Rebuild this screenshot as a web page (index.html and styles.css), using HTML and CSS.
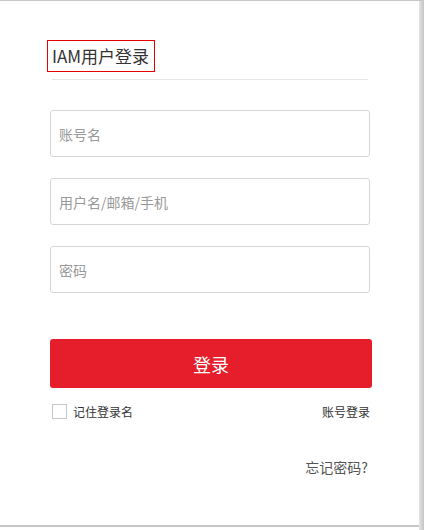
FILE: index.html
```html
<!DOCTYPE html>
<html lang="zh">
<head>
<meta charset="utf-8">
<link rel="stylesheet" href="styles.css">
</head>
<body>
<div class="card">
  <div class="title-row"><span class="title">IAM用户登录</span></div>
  <div class="divider"></div>
  <div class="field first"><span class="ph">账号名</span></div>
  <div class="field"><span class="ph">用户名/邮箱/手机</span></div>
  <div class="field"><span class="ph">密码</span></div>
  <button class="btn">登录</button>
  <div class="opts">
    <label class="remember"><span class="box"></span>记住登录名</label>
    <span class="link">账号登录</span>
  </div>
  <div class="forgot">忘记密码?</div>
</div>
</body>
</html>
```
FILE: styles.css
```css
html, body { margin: 0; padding: 0; }
body {
  width: 424px; height: 530px;
  background: linear-gradient(to right, #fff 0, #fff 419px, #e4e4e4 419px, #c4c4c4 424px);
  border-top: 1px solid #c8c8c8;
  box-sizing: border-box;
  font-family: "Noto Sans CJK SC", "Noto Sans", sans-serif;
  overflow: hidden;
}
.card {
  width: 419px; height: 526px;
  background: #fff;
  box-sizing: border-box;
  padding: 39px 0 0 50px;
  border-bottom: 2px solid #c8c8c8;
}
.title-row { display: flex; }
.title {
  margin-left: -3px;
  width: 108px; height: 32px;
  box-sizing: border-box;
  border: 1px solid #e60000;
  font-size: 17px; color: #333;
  padding-left: 4px;
  line-height: 30px;
  white-space: nowrap;
}
.divider {
  margin: 7px 0 0 2px;
  width: 316px; height: 1px; background: #e4e4e4;
}
.field {
  width: 320px; height: 47px;
  box-sizing: border-box;
  border: 1px solid #d6d6d6; border-radius: 3px;
  margin-top: 21px;
  display: flex; align-items: center;
  padding-left: 8px;
}
.field.first { margin-top: 30px; }
.ph { font-size: 14px; color: #999; }
.btn {
  display: block;
  width: 322px; height: 49px;
  margin-top: 46px;
  border: 0; border-radius: 3px;
  background: #e61e2c; color: #fff;
  font-family: inherit; font-size: 18px;
  padding: 0;
}
.opts {
  width: 320px; margin-top: 15px;
  display: flex; justify-content: space-between; align-items: center;
  font-size: 12px; color: #333;
}
.remember { display: flex; align-items: center; gap: 6px; margin-left: 2px; }
.box {
  width: 15px; height: 15px; box-sizing: border-box;
  border: 1px solid #c8c8c8; background: #fff;
}
.forgot {
  width: 318px; text-align: right;
  margin-top: 37px;
  font-size: 14px; color: #555;
}
```
